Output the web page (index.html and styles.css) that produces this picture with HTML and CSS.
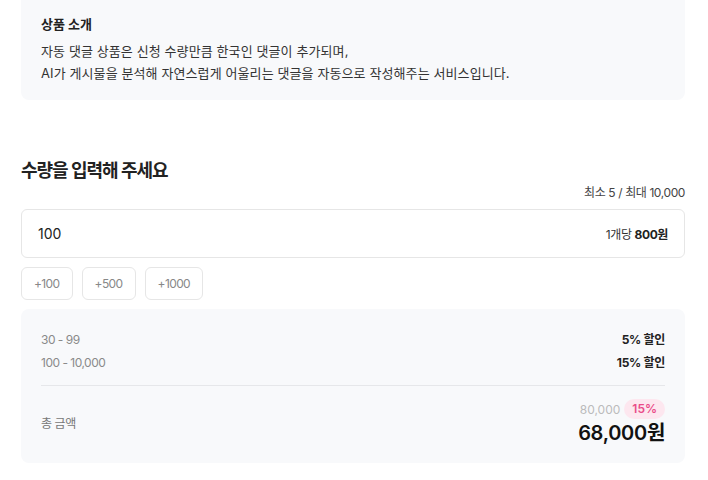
FILE: index.html
```html
<!DOCTYPE html>
<html lang="ko">
<head>
<meta charset="utf-8">
<title>자동 댓글</title>
<link rel="stylesheet" href="styles.css">
</head>
<body>
<main class="page">
  <section class="intro">
    <h3 class="intro-title">상품 소개</h3>
    <p class="intro-text">자동 댓글 상품은 신청 수량만큼 한국인 댓글이 추가되며,<br>AI가 게시물을 분석해 자연스럽게 어울리는 댓글을 자동으로 작성해주는 서비스입니다.</p>
  </section>

  <section class="order">
    <h2 class="order-title">수량을 입력해 주세요</h2>
    <div class="limit">최소 5 / 최대 10,000</div>
    <div class="qty-box">
      <span class="qty-value">100</span>
      <span class="unit-price">1개당 <b>800원</b></span>
    </div>
    <div class="quick">
      <button class="quick-btn" type="button">+100</button>
      <button class="quick-btn" type="button">+500</button>
      <button class="quick-btn" type="button">+1000</button>
    </div>

    <div class="price-card">
      <div class="tier"><span class="tier-range">30 - 99</span><span class="tier-off">5% 할인</span></div>
      <div class="tier"><span class="tier-range">100 - 10,000</span><span class="tier-off">15% 할인</span></div>
      <hr class="divider">
      <div class="total">
        <span class="total-label">총 금액</span>
        <div class="total-amount">
          <div class="total-meta">
            <span class="original">80,000</span>
            <span class="badge">15%</span>
          </div>
          <div class="final">68,000원</div>
        </div>
      </div>
    </div>
  </section>
</main>
</body>
</html>
```

FILE: styles.css
```css
* {
  box-sizing: border-box;
}

body {
  margin: 0;
  background: #ffffff;
  font-family: Inter, "Noto Sans CJK KR", sans-serif;
  color: #222222;
}

.page {
  padding: 0 23px 0 21px;
}

/* product intro card */
.intro {
  margin-top: -12px;
  padding: 26px 20px 16px;
  background: #f8f9fb;
  border-radius: 8px;
}

.intro-title {
  margin: 0;
  font-size: 13px;
  line-height: 20px;
  font-weight: 700;
  color: #222222;
  letter-spacing: 0;
}

.intro-text {
  margin: 6px 0 0;
  font-size: 13px;
  line-height: 22px;
  color: #333333;
  letter-spacing: 0.1px;
}

/* quantity input */
.order {
  padding-top: 58px;
}

.order-title {
  margin: 0;
  font-size: 18px;
  line-height: 26px;
  font-weight: 700;
  letter-spacing: -1px;
  color: #222222;
}

.limit {
  text-align: right;
  font-size: 12px;
  line-height: 18px;
  color: #444444;
  letter-spacing: -0.4px;
}

.qty-box {
  margin-top: 7px;
  height: 49px;
  border: 1px solid #e6e6e6;
  border-radius: 6px;
  display: flex;
  align-items: center;
  justify-content: space-between;
  padding: 0 16px 0 16px;
}

.qty-value {
  font-size: 14px;
  color: #222222;
}

.unit-price {
  font-size: 12px;
  color: #333333;
  letter-spacing: -0.4px;
}

.unit-price b {
  font-weight: 700;
  color: #222222;
}

.quick {
  margin-top: 9px;
  display: flex;
  gap: 9px;
}

.quick-btn {
  height: 33px;
  padding: 0 12px;
  border: 1px solid #e6e6e6;
  border-radius: 6px;
  background: #ffffff;
  font-family: inherit;
  font-size: 12px;
  letter-spacing: -0.6px;
  color: #888888;
}

/* discount tiers and total */
.price-card {
  margin-top: 9px;
  padding: 19px 20px 17px;
  background: #f8f9fb;
  border-radius: 8px;
}

.tier {
  display: flex;
  justify-content: space-between;
  align-items: center;
  font-size: 12px;
  line-height: 23px;
}

.tier-range {
  color: #8a8a8a;
  letter-spacing: -0.5px;
}

.tier-off {
  font-weight: 700;
  color: #222222;
  letter-spacing: -0.3px;
}

.divider {
  margin: 11px 0 13px;
  border: 0;
  border-top: 1px solid #e6e7ea;
}

.total {
  display: flex;
  justify-content: space-between;
  align-items: center;
}

.total-label {
  font-size: 12px;
  color: #777777;
  letter-spacing: -0.4px;
}

.total-amount {
  display: flex;
  flex-direction: column;
  align-items: flex-end;
}

.total-meta {
  display: flex;
  align-items: center;
  gap: 4px;
}

.original {
  font-size: 12px;
  color: #bbbbbb;
}

.badge {
  height: 20px;
  padding: 0 8px;
  border-radius: 10px;
  background: #fde7ef;
  color: #ea4c89;
  font-size: 12px;
  font-weight: 600;
  line-height: 20px;
}

.final {
  margin-top: 1px;
  font-size: 20px;
  line-height: 26px;
  font-weight: 600;
  color: #111111;
  letter-spacing: -0.3px;
}
```
